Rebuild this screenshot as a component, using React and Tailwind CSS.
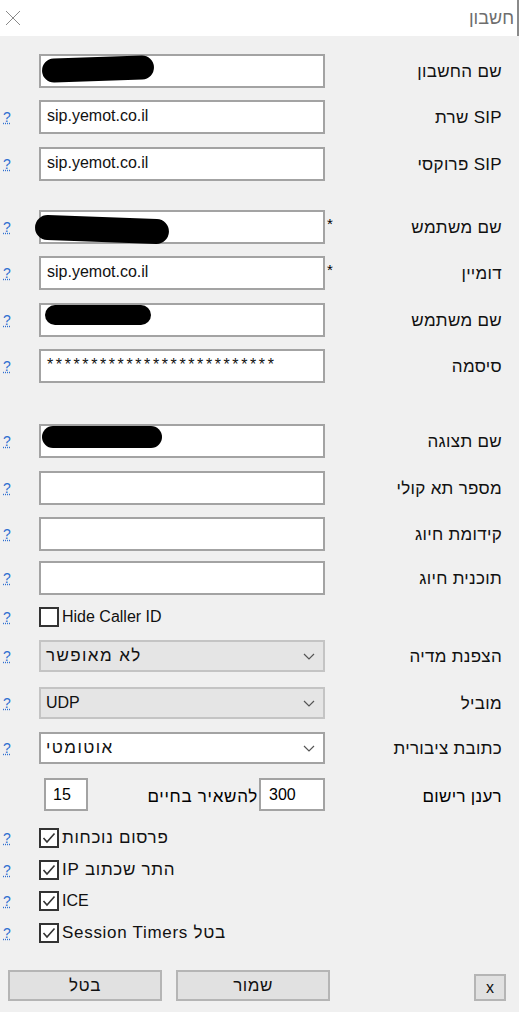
import React from "react";

const Help = () => (
  <span className="w-[39px] shrink-0 pl-[3px] text-[14px] text-[#2f6fd0] underline decoration-dotted">?</span>
);

const Blob = ({ cls }) => <span className={"absolute bg-black rounded-full " + cls}></span>;

const Label = ({ children }) => (
  <span dir="rtl" className="flex-1 text-right pr-[17px] text-[17px] tracking-[0.3px] text-[#111] pt-[1px]">{children}</span>
);

const Field = ({ label, value, help = true, star = false, blob, mt, extra = "" }) => (
  <div className={"flex items-center h-[34px] " + mt}>
    {help ? <Help /> : <span className="w-[39px] shrink-0"></span>}
    <div className={"relative w-[286px] h-[34px] shrink-0 bg-white border-2 border-[#a3a3a3] pl-[6px] pt-[2px] text-[16px] text-[#111] " + extra}>
      {value}
      {blob}
    </div>
    <span className="w-[16px] shrink-0 pl-[2px] text-[15px] -mt-[6px]">{star ? "*" : ""}</span>
    <Label>{label}</Label>
  </div>
);

const Chevron = () => (
  <svg width="12" height="7" viewBox="0 0 12 7" className="shrink-0">
    <path d="M1 1 L6 6 L11 1" fill="none" stroke="#555" strokeWidth="1.2" />
  </svg>
);

const Select = ({ label, value, disabled, mt, hebValue }) => (
  <div className={"flex items-center h-[32px] " + mt}>
    <Help />
    <div className={"w-[286px] h-[32px] shrink-0 border-2 flex items-center justify-between pl-[5px] pr-[8px] text-[#111] " + (disabled ? "bg-[#e5e5e5] border-[#c4c4c4]" : "bg-white border-[#a3a3a3]")}>
      <span dir="rtl" className={hebValue ? "text-[17px] tracking-[1.4px]" : "text-[16px]"}>{value}</span>
      <Chevron />
    </div>
    <Label>{label}</Label>
  </div>
);

const Check = ({ label, checked, mt, hebLabel }) => (
  <div className={"flex items-center h-[20px] " + mt}>
    <Help />
    <span className="w-[20px] h-[20px] shrink-0 border-2 border-[#333] bg-white flex items-center justify-center">
      {checked && (
        <svg width="14" height="12" viewBox="0 0 14 12">
          <path d="M1.5 6 L5 10 L12.5 1.5" fill="none" stroke="#333" strokeWidth="1.6" />
        </svg>
      )}
    </span>
    <span dir="rtl" className={"pl-[3px] text-[#111] " + (hebLabel ? "text-[17px] tracking-[0.7px]" : "text-[16px]")}>{label}</span>
  </div>
);

export default function App() {
  return (
    <div className="w-[519px] h-[1012px] bg-[#f0f0f0] flex flex-col overflow-hidden font-['Liberation_Sans',sans-serif]">
      <div className="h-[36px] bg-white flex items-center justify-between border-r-2 border-[#8a8a8a] shrink-0">
        <svg width="16" height="16" viewBox="0 0 16 16" className="ml-[5px]">
          <path d="M1 1 L15 15 M15 1 L1 15" stroke="#8a8a8a" strokeWidth="1" />
        </svg>
        <span className="pr-[3px] text-[18px] text-[#6e6e6e]">חשבון</span>
      </div>

      <Field mt="mt-[18px]" label="שם החשבון" help={false} blob={<Blob cls="left-[1px] top-[1px] w-[112px] h-[24px] rotate-[-2deg]" />} />
      <Field mt="mt-[12px]" label="SIP שרת" value="sip.yemot.co.il" />
      <Field mt="mt-[13px]" label="SIP פרוקסי" value="sip.yemot.co.il" />
      <Field mt="mt-[29px]" label="שם משתמש" star blob={<Blob cls="-left-[6px] top-[5px] w-[134px] h-[25px] rotate-[2deg]" />} />
      <Field mt="mt-[12px]" label="דומיין" value="sip.yemot.co.il" star />
      <Field mt="mt-[13px]" label="שם משתמש" blob={<Blob cls="left-[4px] top-[0px] w-[106px] h-[20px]" />} />
      <Field mt="mt-[12px]" label="סיסמה" value="**************************" extra="tracking-[2.6px]" />
      <Field mt="mt-[41px]" label="שם תצוגה" blob={<Blob cls="left-[1px] top-[0px] w-[120px] h-[22px]" />} />
      <Field mt="mt-[13px]" label="מספר תא קולי" />
      <Field mt="mt-[12px]" label="קידומת חיוג" />
      <Field mt="mt-[10px]" label="תוכנית חיוג" />

      <Check mt="mt-[12px]" label="Hide Caller ID" />

      <Select mt="mt-[13px]" label="הצפנת מדיה" value="לא מאופשר" disabled hebValue />
      <Select mt="mt-[15px]" label="מוביל" value="UDP" disabled />
      <Select mt="mt-[13px]" label="כתובת ציבורית" value="אוטומטי" hebValue />

      <div className="flex items-center h-[33px] mt-[14px]">
        <span className="w-[44px] shrink-0"></span>
        <div className="w-[44px] h-[33px] bg-white border-2 border-[#a3a3a3] pl-[7px] pt-[3px] text-[16px] shrink-0">15</div>
        <span dir="rtl" className="w-[171px] shrink-0 text-right pr-[1px] text-[17px] tracking-[0.7px] pt-[4px]">להשאיר בחיים</span>
        <div className="w-[66px] h-[33px] bg-white border-2 border-[#a3a3a3] pl-[8px] pt-[3px] text-[16px] shrink-0">300</div>
        <span dir="rtl" className="flex-1 text-right pr-[17px] text-[17px] tracking-[0.3px] pt-[4px]">רענן רישום</span>
      </div>

      <Check mt="mt-[17px]" label="פרסום נוכחות" checked hebLabel />
      <Check mt="mt-[12px]" label="התר שכתוב IP" checked hebLabel />
      <Check mt="mt-[11px]" label="ICE" checked />
      <Check mt="mt-[12px]" label="בטל Session Timers" checked hebLabel />

      <div className="flex items-end mt-[27px]">
        <button className="ml-[8px] w-[154px] h-[31px] bg-[#e1e1e1] border-2 border-[#b5b5b5] text-[17px] tracking-[0.5px] text-[#111]">בטל</button>
        <button className="ml-[14px] w-[154px] h-[31px] bg-[#e1e1e1] border-2 border-[#b5b5b5] text-[17px] tracking-[0.5px] text-[#111]">שמור</button>
        <button className="ml-[144px] w-[32px] h-[27px] bg-[#e1e1e1] border-2 border-[#b5b5b5] text-[16px] text-[#111] leading-none pt-[1px]">x</button>
      </div>
    </div>
  );
}
